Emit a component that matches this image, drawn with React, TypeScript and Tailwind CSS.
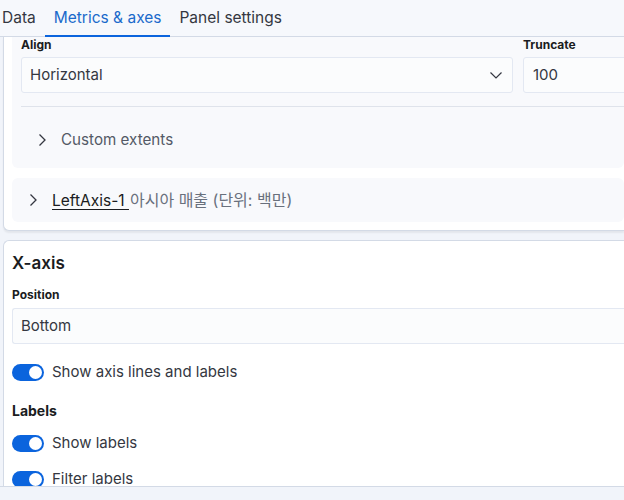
import React from "react";

const ChevronRight = () => (
  <svg width="16" height="16" viewBox="0 0 16 16" fill="none" stroke="#343741" strokeWidth="1.3" className="shrink-0">
    <path d="M5.5 2.5 L11 8 L5.5 13.5" />
  </svg>
);

const ChevronDown = () => (
  <svg width="16" height="16" viewBox="0 0 16 16" fill="none" stroke="#343741" strokeWidth="1.2">
    <path d="M2.5 5.5 L8 11 L13.5 5.5" />
  </svg>
);

const Toggle = () => (
  <div className="w-[32px] h-[17px] rounded-full bg-[#0b64dd] relative shrink-0">
    <div className="absolute right-[2px] top-[2px] w-[13px] h-[13px] rounded-full bg-white" />
  </div>
);

export default function App() {
  return (
    <div className="w-[624px] h-[500px] overflow-hidden bg-[#f1f4fa] flex flex-col font-['Inter','Noto_Sans_CJK_KR',sans-serif] text-[#343741]">
      {/* Tabs */}
      <div className="h-[37px] shrink-0 bg-[#f6f8fc] border-b border-[#d3dae6] flex items-stretch">
        <div className="ml-[-7px] px-[9px] flex items-center text-[15.5px] text-[#343741]">Data</div>
        <div className="px-[9px] flex items-center text-[15.5px] text-[#1a6acb] border-b-2 border-[#0b64dd] mb-[-1px]">Metrics &amp; axes</div>
        <div className="px-[9px] flex items-center text-[15.5px] text-[#343741]">Panel settings</div>
      </div>

      {/* Body */}
      <div className="flex-1 overflow-hidden pl-[3px]">
        {/* Outer card (Y axis) */}
        <div className="bg-white border-l border-b border-[#d3dae6] rounded-bl-[6px] shadow-[0_2px_2px_rgba(0,0,0,0.06)] pb-[8px]">
          <div className="ml-[8px] bg-[#f8f9fc] rounded-b-[6px] pl-[9px]">
            <div className="flex gap-[10px]">
              <div className="w-[492px] shrink-0">
                <div className="text-[12px] font-bold text-[#1a1c21] leading-[16px] h-[20px]">Align</div>
                <div className="h-[36px] bg-[#fbfcfd] border border-[#e3e8f2] rounded-[3px] flex items-center justify-between pl-[8px] pr-[8px]">
                  <span className="text-[15px] pt-[1px]">Horizontal</span>
                  <ChevronDown />
                </div>
              </div>
              <div className="flex-1">
                <div className="text-[12px] font-bold text-[#1a1c21] leading-[16px] h-[20px]">Truncate</div>
                <div className="h-[36px] w-[140px] bg-[#fbfcfd] border border-[#e3e8f2] rounded-[3px] flex items-center pl-[9px]">
                  <span className="text-[15px] pt-[1px]">100</span>
                </div>
              </div>
            </div>
            <div className="mt-[13px] border-t border-[#dfe3eb]" />
            <div className="h-[61px] pt-[5px] flex items-center pl-[13px] gap-[11px]">
              <ChevronRight />
              <span className="text-[15.2px] text-[#535966]">Custom extents</span>
            </div>
          </div>
          <div className="mt-[10px] ml-[8px] h-[44px] bg-[#f8f9fc] rounded-[6px] flex items-center pl-[13px] gap-[11px]">
            <ChevronRight />
            <span className="flex items-baseline">
              <span className="text-[15.5px] text-[#1a1c21] underline underline-offset-[3px] whitespace-pre">LeftAxis-1 </span>
              <span className="text-[16px] text-[#69707d] ml-[1px]">아시아 매출 (단위: 백만)</span>
            </span>
          </div>
        </div>

        {/* X axis card */}
        <div className="mt-[9px] bg-white border-l border-t border-[#d3dae6] rounded-tl-[6px] pl-[8px] pt-[10px] h-[250px]">
          <div className="text-[17px] font-semibold text-[#1a1c21] leading-[24px]">X-axis</div>
          <div className="mt-[12px] text-[12px] font-bold text-[#1a1c21] leading-[16px] h-[21px]">Position</div>
          <div className="h-[36px] bg-[#fbfcfd] border border-[#e3e8f2] border-r-0 rounded-l-[3px] flex items-center pl-[8px]">
            <span className="text-[15px] pt-[1px]">Bottom</span>
          </div>
          <div className="mt-[19px] flex items-center gap-[8px] h-[18px]">
            <Toggle />
            <span className="text-[15px]">Show axis lines and labels</span>
          </div>
          <div className="mt-[21px] text-[14px] font-bold text-[#1a1c21] leading-[18px]">Labels</div>
          <div className="mt-[14px] flex items-center gap-[8px] h-[18px]">
            <Toggle />
            <span className="text-[15px]">Show labels</span>
          </div>
          <div className="mt-[18px] flex items-center gap-[8px] h-[18px]">
            <Toggle />
            <span className="text-[15px]">Filter labels</span>
          </div>
        </div>
      </div>

      {/* Footer strip */}
      <div className="h-[14px] shrink-0 border-t border-[#d3dae6] bg-[#f1f4fa]" />
    </div>
  );
}
